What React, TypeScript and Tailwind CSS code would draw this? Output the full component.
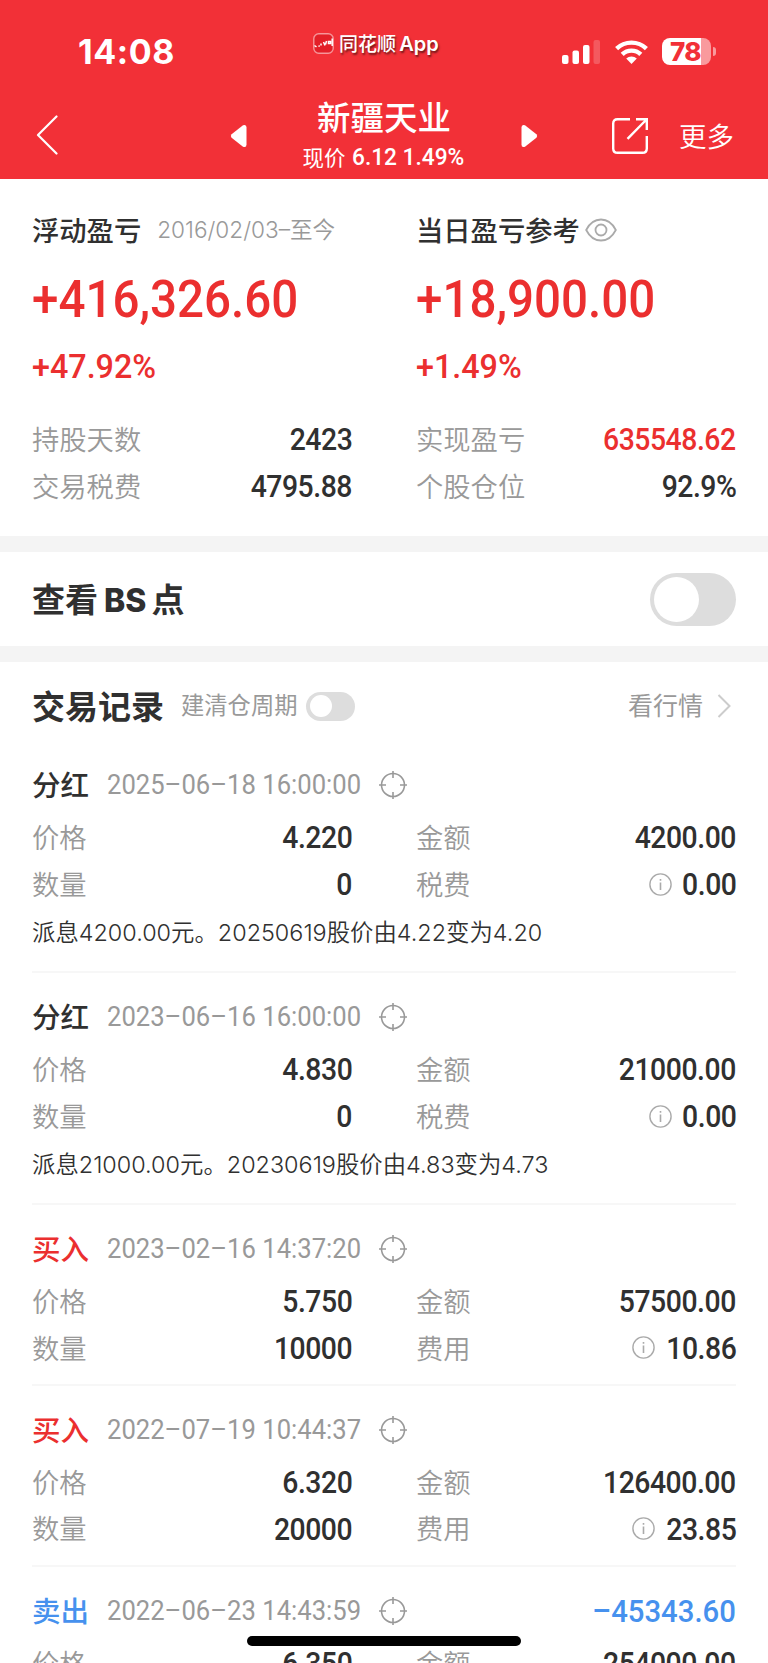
import type { ReactNode } from "react"

type Tone = "plain" | "buy" | "sell"

interface TradeRecord {
  kind: string
  tone: Tone
  time: string
  profit?: string
  price: string
  amount: string
  quantity?: string
  feeLabel?: string
  fee?: string
  note?: string
}

const records: TradeRecord[] = [
  {
    kind: "分红",
    tone: "plain",
    time: "2025–06–18 16:00:00",
    price: "4.220",
    amount: "4200.00",
    quantity: "0",
    feeLabel: "税费",
    fee: "0.00",
    note: "派息4200.00元。20250619股价由4.22变为4.20",
  },
  {
    kind: "分红",
    tone: "plain",
    time: "2023–06–16 16:00:00",
    price: "4.830",
    amount: "21000.00",
    quantity: "0",
    feeLabel: "税费",
    fee: "0.00",
    note: "派息21000.00元。20230619股价由4.83变为4.73",
  },
  {
    kind: "买入",
    tone: "buy",
    time: "2023–02–16 14:37:20",
    price: "5.750",
    amount: "57500.00",
    quantity: "10000",
    feeLabel: "费用",
    fee: "10.86",
  },
  {
    kind: "买入",
    tone: "buy",
    time: "2022–07–19 10:44:37",
    price: "6.320",
    amount: "126400.00",
    quantity: "20000",
    feeLabel: "费用",
    fee: "23.85",
  },
  {
    kind: "卖出",
    tone: "sell",
    time: "2022–06–23 14:43:59",
    profit: "–45343.60",
    price: "6.350",
    amount: "254000.00",
  },
]

const toneClass: Record<Tone, string> = {
  plain: "text-[#303030]",
  buy: "text-[#eb2f2f]",
  sell: "text-[#4691ee]",
}

function StatusBar() {
  return (
    <div className="flex h-[90px] items-start pr-[52px] pl-[78px]">
      <span className="mt-[32px] w-[235px] font-['Inter'] text-[34px] leading-[40px] font-bold tracking-[0.6px]">14:08</span>
      <div className="mt-[31px] flex items-center gap-[5px] [text-shadow:1px_2px_2px_rgba(0,0,0,0.55)]">
        <svg width="21" height="21" viewBox="0 0 21 21" fill="none">
          <rect x="0.8" y="0.8" width="19.4" height="19.4" rx="5" fill="#e31f28" stroke="#fff" strokeOpacity="0.5" strokeWidth="1.4" />
          <path d="M1.5 12.5l2 1.5M5.5 13.5l1.2-.8M8 10.5v2M10.5 9l1.5 3.5M13.5 8l-1 3.5M15.5 8.500h2v2h-2zM19.2 5.500V13" stroke="#fff" strokeWidth="1.5" />
        </svg>
        <span className="text-[19px] leading-[24px] font-medium">
          同花顺 <span className="-ml-[1px] font-['Inter'] text-[20px] font-semibold">App</span>
        </span>
      </div>
      <div className="mt-[38px] ml-auto flex items-center gap-[14px]">
        <svg width="39" height="24" viewBox="0 0 39 24" fill="#fff">
          <rect x="0" y="15" width="6.5" height="9" rx="2" />
          <rect x="10.5" y="10.5" width="6.5" height="13.5" rx="2" />
          <rect x="21" y="5" width="6.5" height="19" rx="2" />
          <rect x="31.5" y="0" width="6.5" height="24" rx="2" opacity="0.2" />
        </svg>
        <svg width="33" height="24" viewBox="0 0 33 24" fill="none" stroke="#fff" strokeWidth="4.4">
          <path d="M1.6 8.6a21.5 21.5 0 0 1 29.8 0" />
          <path d="M7.2 14.4a13.4 13.4 0 0 1 18.6 0" />
          <path d="M11.2 18.6a7.5 7.5 0 0 1 10.6 0L16.5 24z" fill="#fff" stroke="none" />
        </svg>
        <div className="flex items-center gap-[2px]">
          <div className="flex h-[27px] w-[49px] items-center justify-center rounded-[8px] bg-[linear-gradient(90deg,#fff_39px,#f99a9d_39px)] font-['Inter'] text-[26px] leading-none font-extrabold text-[#f23037]">
            <span className="-ml-[2px] tracking-[-0.5px]">78</span>
          </div>
          <div className="h-[9px] w-[3px] rounded-r-full bg-[#f99a9d]" />
        </div>
      </div>
    </div>
  )
}

function NavBar() {
  return (
    <div className="flex h-[89px] items-center pl-[36px]">
      <svg width="22" height="40" viewBox="0 0 22 40" fill="none" stroke="#fff" strokeWidth="2.2" strokeLinecap="round" strokeLinejoin="round">
        <path d="M20.5 1.5L2 20l18.5 18.5" />
      </svg>
      <svg className="mt-[2px] ml-[172px]" width="18" height="24" viewBox="0 0 18 24" fill="#fff">
        <path d="M1.6 10.2L13 1.3Q16.5 0 16.5 3.5V20.5Q16.5 24 13 22.7L1.6 13.8Q0 12 1.6 10.2z" />
      </svg>
      <div className="flex w-[272px] flex-col items-center pt-[4px]">
        <h1 className="text-[33.5px] leading-[40px] font-medium">新疆天业</h1>
        <p className="flex w-[163px] items-center text-[21.5px] leading-[41px] whitespace-nowrap">
          现价
          <span className="ml-[6px] inline-block origin-left scale-x-[0.945] pt-[1px] font-['Roboto'] text-[24px] font-medium">
            6.12 1.49%
          </span>
        </p>
      </div>
      <svg className="mt-[2px]" width="18" height="24" viewBox="0 0 18 24" fill="#fff">
        <path d="M16.4 10.2L5 1.3Q1.5 0 1.5 3.5V20.5Q1.5 24 5 22.7L16.4 13.8Q18 12 16.4 10.2z" />
      </svg>
      <svg className="mt-[2px] ml-[74px]" width="36" height="36" viewBox="0 0 36 36" fill="none" stroke="#fff" strokeWidth="2.4">
        <path d="M18 1.3H5.5Q1.2 1.3 1.2 5.5V30.5Q1.2 34.8 5.5 34.8H30.5Q34.8 34.8 34.8 30.5V18" />
        <path d="M24 1.3H34.8V12M34 2L15.5 20.8" />
      </svg>
      <span className="ml-[31px] text-[27.5px] leading-[40px] font-[350]">更多</span>
    </div>
  )
}

function Stat({ label, children }: { label: string; children: ReactNode }) {
  return (
    <div className="flex h-[46.7px] items-center justify-between">
      <span className="pb-[2px] text-[27.3px] font-[350] text-[#999]">{label}</span>
      <span className="flex items-center pt-[2px] text-[#303030]">{children}</span>
    </div>
  )
}

// Roboto squeezed towards the narrow proportions of a DIN face
function Num({ children }: { children: ReactNode }) {
  return (
    <span className="inline-block origin-right scale-x-[0.93] font-['Roboto'] text-[30.5px] font-medium tracking-[-0.5px]">
      {children}
    </span>
  )
}

function Gain({ value, percent }: { value: string; percent: string }) {
  return (
    <div className="mt-[10px] flex flex-col items-start font-['Roboto'] font-medium text-[#eb2f2f]">
      <p className="h-[78px] origin-left scale-x-[0.923] text-[51.5px] leading-[80px]">{value}</p>
      <p className="h-[56px] origin-left scale-x-[0.95] text-[34px] leading-[56px]">{percent}</p>
    </div>
  )
}

function Switch({ small }: { small?: boolean }) {
  return small ? (
    <div className="flex h-[29px] w-[49px] items-center rounded-full bg-[#ddd] pl-[4px]">
      <div className="size-[22px] rounded-full bg-white" />
    </div>
  ) : (
    <div className="flex h-[53px] w-[86px] items-center rounded-full bg-[#ddd] pl-[4px]">
      <div className="size-[45px] rounded-full bg-white" />
    </div>
  )
}

function EyeIcon() {
  return (
    <svg width="32" height="24" viewBox="0 0 32 24" fill="none" stroke="#aaa" strokeWidth="1.8">
      <path d="M1.2 12C4.5 5.5 9.5 1.5 16 1.5S27.5 5.5 30.8 12C27.5 18.5 22.5 22.5 16 22.5S4.5 18.5 1.2 12z" />
      <circle cx="16" cy="12" r="5.5" />
    </svg>
  )
}

function TargetIcon() {
  return (
    <svg width="28" height="28" viewBox="0 0 28 28" fill="none" stroke="#999" strokeWidth="1.6">
      <circle cx="14" cy="14" r="11.5" />
      <path d="M14 0v7M14 21v7M0 14h7M21 14h7" />
    </svg>
  )
}

function InfoIcon() {
  return (
    <svg className="mr-[6px] mb-[2px]" width="23" height="23" viewBox="0 0 23 23" fill="none" stroke="#aaa" strokeWidth="1.4">
      <circle cx="11.5" cy="11.5" r="10.6" />
      <path d="M11.5 9.5v7.5M11.5 6v1.8" strokeWidth="1.6" />
    </svg>
  )
}

function Summary() {
  return (
    <section className="grid h-[357px] grid-cols-2 gap-x-[64px] px-[32px] pt-[31px]">
      <div>
        <div className="flex h-[40px] items-center">
          <h2 className="pb-[2px] text-[27.3px] font-medium">浮动盈亏</h2>
          <span className="ml-[16px] font-['Inter','Noto_Sans_CJK_SC'] text-[22.6px] font-[350] whitespace-nowrap text-[#999]">
            2016/02/03–至今
          </span>
        </div>
        <Gain value="+416,326.60" percent="+47.92%" />
        <div className="mt-[22px]">
          <Stat label="持股天数">
            <Num>2423</Num>
          </Stat>
          <Stat label="交易税费">
            <Num>4795.88</Num>
          </Stat>
        </div>
      </div>
      <div>
        <div className="flex h-[40px] items-center">
          <h2 className="pb-[2px] text-[27.3px] font-medium">当日盈亏参考</h2>
          <div className="ml-[5px]">
            <EyeIcon />
          </div>
        </div>
        <Gain value="+18,900.00" percent="+1.49%" />
        <div className="mt-[22px]">
          <Stat label="实现盈亏">
            <Num>
              <span className="text-[#eb2f2f]">635548.62</span>
            </Num>
          </Stat>
          <Stat label="个股仓位">
            <Num>92.9%</Num>
          </Stat>
        </div>
      </div>
    </section>
  )
}

function RecordItem({ record }: { record: TradeRecord }) {
  return (
    <article className="border-b-2 border-[#f7f7f7] pt-[15px] pb-[12.6px]">
      <div className="flex h-[58px] items-center">
        <h3 className={`pb-[1px] text-[28.5px] font-medium ${toneClass[record.tone]}`}>{record.kind}</h3>
        <div className="ml-[18px] w-[272px]">
          <span className="inline-block origin-left scale-x-[0.932] font-['Roboto'] text-[27.5px] whitespace-nowrap text-[#999]">
            {record.time}
          </span>
        </div>
        <TargetIcon />
        {record.profit && (
          <span className="ml-auto inline-block origin-right scale-x-[0.945] pt-[2px] font-['Roboto'] text-[31px] font-medium text-[#4691ee]">
            {record.profit}
          </span>
        )}
      </div>
      <div className="grid grid-cols-2 gap-x-[64px]">
        <Stat label="价格">
          <Num>{record.price}</Num>
        </Stat>
        <Stat label="金额">
          <Num>{record.amount}</Num>
        </Stat>
        {record.quantity && record.feeLabel && (
          <>
            <Stat label="数量">
              <Num>{record.quantity}</Num>
            </Stat>
            <Stat label={record.feeLabel}>
              <InfoIcon />
              <Num>{record.fee}</Num>
            </Stat>
          </>
        )}
      </div>
      {record.note && (
        <p className="h-[51px] font-['Inter','Noto_Sans_CJK_SC'] text-[23.4px] leading-[52px] font-[350] text-[#303030]">
          {record.note}
        </p>
      )}
    </article>
  )
}

export default function App() {
  return (
    <div className="relative h-[1663px] w-[768px] overflow-hidden bg-white font-['Noto_Sans_CJK_SC',sans-serif] text-[#303030]">
      <header className="bg-[#f23037] text-white">
        <StatusBar />
        <NavBar />
      </header>
      <Summary />
      <section className="flex h-[126px] items-center justify-between border-y-[16px] border-[#f4f4f4] px-[32px]">
        <h2 className="text-[33px] font-bold">
          查看<span className="mr-[5px] ml-[6px] font-['Inter'] text-[32px] font-extrabold">BS</span>点
        </h2>
        <Switch />
      </section>
      <section className="px-[32px]">
        <div className="flex h-[79px] items-center pt-[9px]">
          <h2 className="pb-[1px] text-[33px] font-bold">交易记录</h2>
          <span className="mr-[9px] ml-[17px] pb-[3px] text-[23.3px] text-[#999]">建清仓周期</span>
          <Switch small />
          <span className="mr-[14px] ml-auto pb-[2px] text-[25px] text-[#999]">看行情</span>
          <svg className="mr-[5px]" width="14" height="24" viewBox="0 0 14 24" fill="none" stroke="#ccc" strokeWidth="2">
            <path d="M1.5 1L12.5 12L1.5 23" />
          </svg>
        </div>
        {records.map((record) => (
          <RecordItem key={record.time} record={record} />
        ))}
      </section>
      {/* Home indicator */}
      <div className="absolute top-[1636px] left-[247px] h-[10px] w-[274px] rounded-full bg-black" />
    </div>
  )
}
